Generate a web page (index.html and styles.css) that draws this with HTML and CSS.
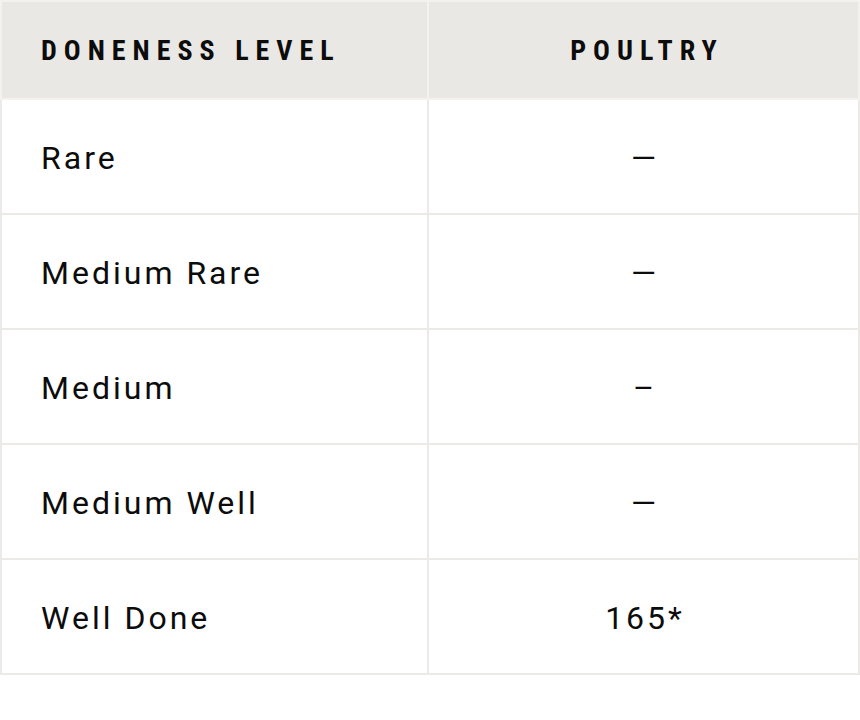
FILE: index.html
```html
<!DOCTYPE html>
<html lang="en">
<head>
<meta charset="utf-8">
<title>Doneness</title>
<link rel="stylesheet" href="styles.css">
</head>
<body>
<table class="temps">
  <colgroup>
    <col class="c-level">
    <col class="c-val">
  </colgroup>
  <thead>
    <tr>
      <th class="col-level">Doneness Level</th>
      <th class="col-val">Poultry</th>
    </tr>
  </thead>
  <tbody>
    <tr><td class="col-level">Rare</td><td class="col-val">—</td></tr>
    <tr><td class="col-level">Medium Rare</td><td class="col-val">—</td></tr>
    <tr><td class="col-level">Medium</td><td class="col-val">–</td></tr>
    <tr><td class="col-level">Medium Well</td><td class="col-val">—</td></tr>
    <tr><td class="col-level">Well Done</td><td class="col-val">165*</td></tr>
  </tbody>
</table>
</body>
</html>
```
FILE: styles.css
```css
html, body {
  margin: 0;
  padding: 0;
  background: #ffffff;
}
.temps {
  width: 860px;
  border-collapse: collapse;
  table-layout: fixed;
  font-family: Roboto, "Liberation Sans", sans-serif;
  color: #0c0c0c;
}
.temps .c-level { width: 427px; }
.temps th {
  background: #e9e8e4;
  border: 2px solid #f3f2ef;
  height: 96px;
  padding: 0 0 0 39px;
  font-family: "Roboto Condensed", "Liberation Sans Narrow", "DejaVu Sans Condensed", Roboto, sans-serif;
  font-weight: 700;
  font-size: 28px;
  letter-spacing: 7px;
  text-transform: uppercase;
  text-align: left;
  vertical-align: middle;
}
.temps th.col-val {
  text-align: center;
  padding: 0 0 0 7px;
}
.temps td {
  border: 2px solid #ebeae6;
  height: 110px;
  padding: 3px 0 0 39px;
  font-size: 32px;
  letter-spacing: 3px;
  vertical-align: middle;
}
.temps td.col-val {
  text-align: center;
  padding: 3px 0 0 3px;
}
```
